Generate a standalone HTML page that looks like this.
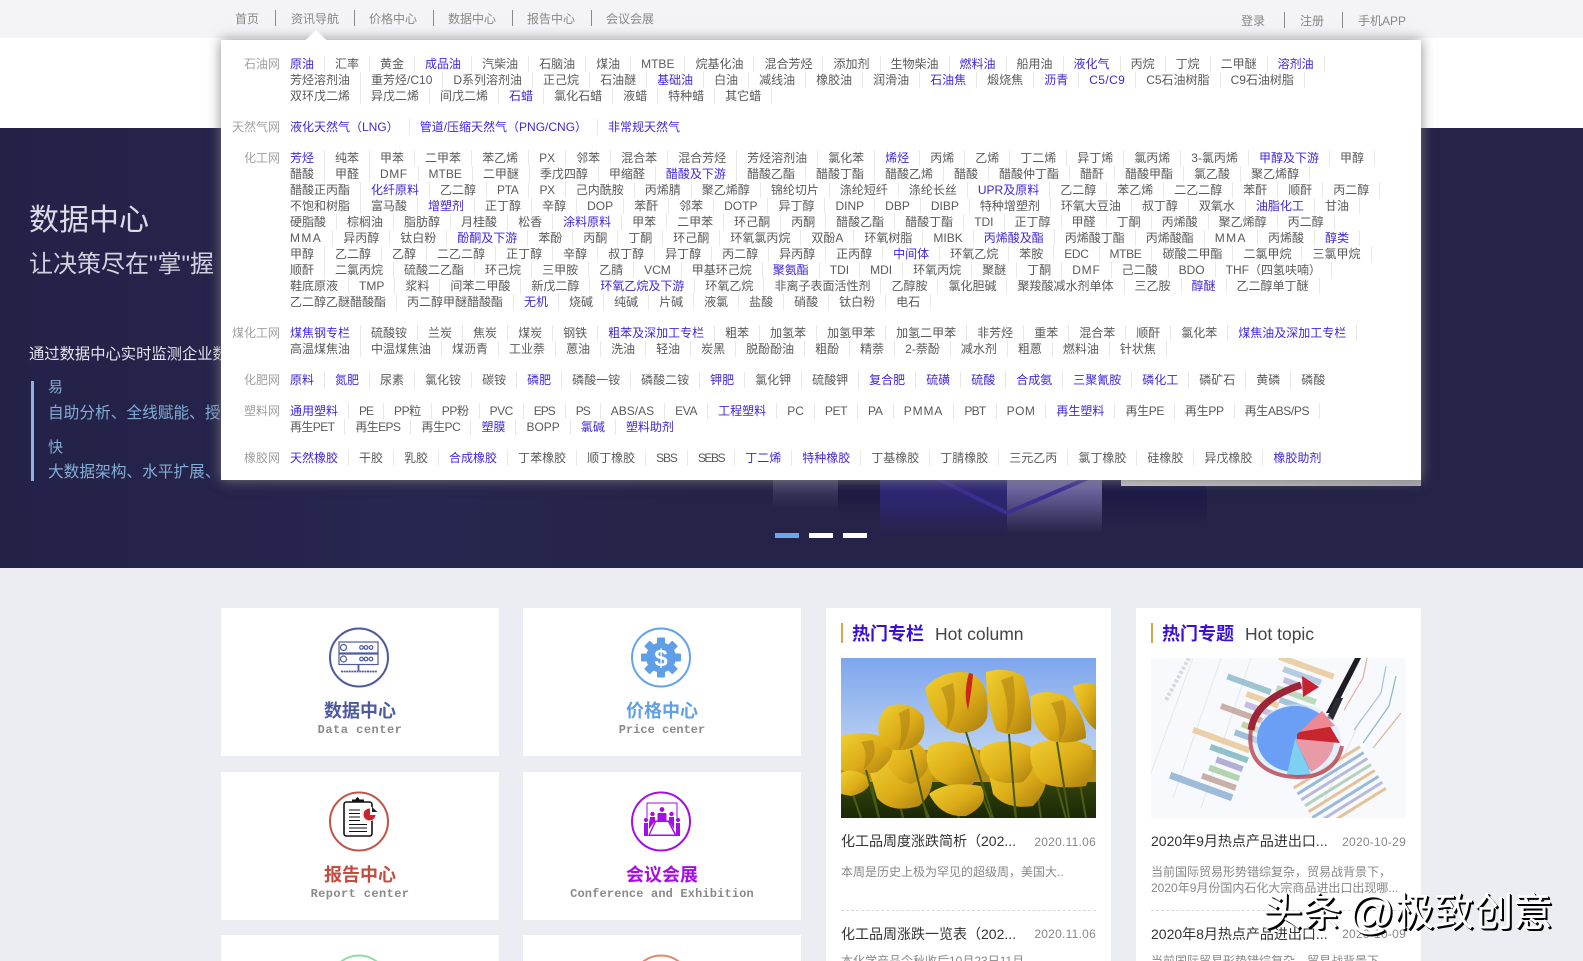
<!DOCTYPE html>
<html lang="zh">
<head>
<meta charset="utf-8">
<title>数据中心</title>
<style>
*{margin:0;padding:0;box-sizing:border-box}
html,body{width:1583px;height:961px;overflow:hidden;background:#ecedf3;font-family:"Liberation Sans","Noto Sans CJK SC",sans-serif;font-size:12px;color:#555}
#wrap{position:relative;width:1583px;height:961px;overflow:hidden;background:#ecedf3}
.abs{position:absolute}
#top{position:absolute;left:0;top:0;width:1583px;height:38px;background:#f3f3f8}
.nv{position:absolute;top:11px;line-height:16px;color:#888;white-space:nowrap}
.nv.u{top:13px}
.sp{position:absolute;width:1px;height:16px;top:10px;background:#8a8a8a}
.sp.u{top:12px}
#banner{position:absolute;left:0;top:38px;width:1583px;height:90px;background:#fff}
#hero{position:absolute;left:0;top:128px;width:1583px;height:440px;background:#252347;overflow:hidden}
#hero div{position:absolute}
.dot{position:absolute;top:533px;width:24px;height:5px;background:#fff}
#panel{position:absolute;left:221px;top:40px;width:1200px;height:440px;background:#fff;padding-top:16px;box-shadow:0 0 12px rgba(125,125,125,.9)}
.g{display:flex;margin-bottom:15px}
.g>label{width:59px;text-align:right;color:#a0a0a0;line-height:16px;white-space:nowrap;flex:none}
.r{display:flex;height:16px;line-height:16px}
.r span,.r a{padding:0 10px;border-right:1px solid #e8e8e8;white-space:nowrap;color:#5a5a5a}
.r a{color:#4526d6}
.r .m1{letter-spacing:-1px}.r .m8{letter-spacing:-.7px}.r .m5{letter-spacing:-.5px}.r .m3{letter-spacing:-.35px}
.r .p15{letter-spacing:1.4px}.r .p1{letter-spacing:.8px}.r .p9{letter-spacing:.9px}
.card{position:absolute;width:278px;height:148px;background:#fff;text-align:center}
.card svg{position:absolute;left:98px;top:10px}
.card b{position:absolute;left:0;width:100%;top:92px;font-size:18px;line-height:22px;font-weight:700;letter-spacing:0}
.card em{position:absolute;left:0;width:100%;top:115px;font:bold 12px/15px "Liberation Mono",monospace;color:#8a8a8a}
.col{position:absolute;top:608px;width:285px;height:353px;background:#fff;overflow:hidden}
.hd{position:absolute;left:15px;top:15px;height:20px;border-left:2px solid #d6a44c;white-space:nowrap;padding-left:9px;line-height:22px}
.hd b{font-size:18px;color:#3a0fd8;margin-right:11px}
.hd span{font-size:17.5px;color:#444}
.tt{position:absolute;left:15px;font-size:14px;line-height:20px;color:#333;white-space:nowrap}
.dt{position:absolute;right:15px;line-height:20px;color:#888;letter-spacing:.25px;white-space:nowrap}
.ds{position:absolute;left:15px;width:258px;line-height:16px;color:#888;white-space:nowrap}
.cut{height:8px;overflow:hidden}
.ln{position:absolute;left:15px;width:255px;top:302px;border-top:1px dashed #d8d8d8}
#wm{position:absolute;left:1263px;top:886px;font-size:39.5px;line-height:54px;color:#fff;text-shadow:2px 2px 0 #000,1px 1px 0 #000;white-space:nowrap}
#wm small{font-size:46px;line-height:40px;vertical-align:-2px;margin-left:-5px}
</style>
</head>
<body>
<div id="wrap">

<div id="top">
  <div class="nv" style="left:235px">首页</div><div class="sp" style="left:275px"></div>
  <div class="nv" style="left:291px">资讯导航</div><div class="sp" style="left:354px"></div>
  <div class="nv" style="left:369px">价格中心</div><div class="sp" style="left:433px"></div>
  <div class="nv" style="left:448px">数据中心</div><div class="sp" style="left:512px"></div>
  <div class="nv" style="left:527px">报告中心</div><div class="sp" style="left:591px"></div>
  <div class="nv" style="left:606px">会议会展</div>
  <div class="nv u" style="left:1241px">登录</div><div class="sp u" style="left:1284px"></div>
  <div class="nv u" style="left:1300px">注册</div><div class="sp u" style="left:1342px"></div>
  <div class="nv u" style="left:1358px">手机APP</div>
</div>

<div id="banner"></div>

<div id="hero">
  <div style="left:0;top:0;width:700px;height:440px;background:linear-gradient(90deg,#242147,#27264e 60%,#252347)"></div>
  <div style="left:773px;top:310px;width:65px;height:70px;background:linear-gradient(#7c7c9a,#55547a 40%,#252347)"></div>
  <div style="left:838px;top:310px;width:42px;height:80px;background:linear-gradient(#1b1840,#1a1740 55%,#252347)"></div>
  <div style="left:880px;top:310px;width:127px;height:100px;background:linear-gradient(#352e86,#2e2778 50%,#252347)"></div>
  <div style="left:1007px;top:310px;width:95px;height:100px;background:linear-gradient(#7f7bb2,#6c68a2 50%,#252347 95%)"></div>
  <div style="left:1102px;top:310px;width:105px;height:90px;background:linear-gradient(#1d1a4a,#1b1846 50%,#252347)"></div>
  <svg class="abs" style="left:900px;top:340px" width="220" height="50" viewBox="0 0 220 50"><path d="M36 10L107 45M107 45L188 10" stroke="#3a2f92" stroke-width="4" fill="none"/></svg>
  <div style="left:29px;top:71px;font-size:30px;line-height:44px;color:#dcdce8;white-space:nowrap">数据中心</div>
  <div style="left:29px;top:119px;font-size:24px;line-height:36px;color:#d2d2e0;white-space:nowrap">让决策尽在"掌"握</div>
  <div style="left:29px;top:216px;font-size:15.3px;line-height:22px;color:#e4e4ee;white-space:nowrap">通过数据中心实时监测企业数据</div>
  <div style="left:31px;top:253px;width:3px;height:100px;background:#8db4dc"></div>
  <div style="left:48px;top:248px;font-size:15px;line-height:24px;color:#82aed6;white-space:nowrap">易</div>
  <div style="left:48px;top:274px;font-size:15.7px;line-height:24px;color:#82aed6;white-space:nowrap">自助分析、全线赋能、授权</div>
  <div style="left:48px;top:308px;font-size:15px;line-height:24px;color:#82aed6;white-space:nowrap">快</div>
  <div style="left:48px;top:333px;font-size:15.7px;line-height:24px;color:#82aed6;white-space:nowrap">大数据架构、水平扩展、高</div>
</div>

<div class="dot" style="left:775px;background:#6aa8ea"></div>
<div class="dot" style="left:809px"></div>
<div class="dot" style="left:843px"></div>

<div class="abs" style="left:1121px;top:480px;width:300px;height:6px;background:linear-gradient(90deg,#c8c8ca,#adabb0)"></div>

<div id="panel">
  <div class="g"><label>石油网</label><div>
    <div class="r"><a>原油</a><span>汇率</span><span>黄金</span><a>成品油</a><span>汽柴油</span><span>石脑油</span><span>煤油</span><span>MTBE</span><span>烷基化油</span><span>混合芳烃</span><span>添加剂</span><span>生物柴油</span><a>燃料油</a><span>船用油</span><a>液化气</a><span>丙烷</span><span>丁烷</span><span>二甲醚</span><a>溶剂油</a></div>
    <div class="r"><span>芳烃溶剂油</span><span>重芳烃/C10</span><span>D系列溶剂油</span><span>正己烷</span><span>石油醚</span><a>基础油</a><span>白油</span><span>减线油</span><span>橡胶油</span><span>润滑油</span><a>石油焦</a><span>煅烧焦</span><a>沥青</a><a style="letter-spacing:.4px">C5/C9</a><span>C5石油树脂</span><span>C9石油树脂</span></div>
    <div class="r"><span>双环戊二烯</span><span>异戊二烯</span><span>间戊二烯</span><a>石蜡</a><span>氯化石蜡</span><span>液蜡</span><span>特种蜡</span><span>其它蜡</span></div>
  </div></div>
  <div class="g"><label>天然气网</label><div>
    <div class="r"><a>液化天然气（LNG）</a><a>管道/压缩天然气（PNG/CNG）</a><a style="border:0">非常规天然气</a></div>
  </div></div>
  <div class="g"><label>化工网</label><div>
    <div class="r"><a>芳烃</a><span>纯苯</span><span>甲苯</span><span>二甲苯</span><span>苯乙烯</span><span>PX</span><span>邻苯</span><span>混合苯</span><span>混合芳烃</span><span>芳烃溶剂油</span><span>氯化苯</span><a>烯烃</a><span>丙烯</span><span>乙烯</span><span>丁二烯</span><span>异丁烯</span><span>氯丙烯</span><span>3-氯丙烯</span><a>甲醇及下游</a><span>甲醇</span></div>
    <div class="r"><span>醋酸</span><span>甲醛</span><span style="letter-spacing:.5px">DMF</span><span>MTBE</span><span>二甲醚</span><span>季戊四醇</span><span>甲缩醛</span><a>醋酸及下游</a><span>醋酸乙酯</span><span>醋酸丁酯</span><span>醋酸乙烯</span><span>醋酸</span><span>醋酸仲丁酯</span><span>醋酐</span><span>醋酸甲酯</span><span>氯乙酸</span><span>聚乙烯醇</span></div>
    <div class="r"><span>醋酸正丙酯</span><a>化纤原料</a><span>乙二醇</span><span class="m3">PTA</span><span class="m3">PX</span><span>己内酰胺</span><span>丙烯腈</span><span>聚乙烯醇</span><span>锦纶切片</span><span>涤纶短纤</span><span>涤纶长丝</span><a>UPR及原料</a><span>乙二醇</span><span>苯乙烯</span><span>二乙二醇</span><span>苯酐</span><span>顺酐</span><span>丙二醇</span></div>
    <div class="r"><span>不饱和树脂</span><span>富马酸</span><a>增塑剂</a><span>正丁醇</span><span>辛醇</span><span>DOP</span><span>苯酐</span><span>邻苯</span><span>DOTP</span><span>异丁醇</span><span>DINP</span><span>DBP</span><span>DIBP</span><span>特种增塑剂</span><span>环氧大豆油</span><span>叔丁醇</span><span>双氧水</span><a>油脂化工</a><span>甘油</span></div>
    <div class="r"><span>硬脂酸</span><span>棕榈油</span><span>脂肪醇</span><span>月桂酸</span><span>松香</span><a>涂料原料</a><span>甲苯</span><span>二甲苯</span><span>环己酮</span><span>丙酮</span><span>醋酸乙酯</span><span>醋酸丁酯</span><span>TDI</span><span>正丁醇</span><span>甲醛</span><span>丁酮</span><span>丙烯酸</span><span>聚乙烯醇</span><span>丙二醇</span></div>
    <div class="r"><span class="p15">MMA</span><span>异丙醇</span><span>钛白粉</span><a>酚酮及下游</a><span>苯酚</span><span>丙酮</span><span>丁酮</span><span>环己酮</span><span>环氧氯丙烷</span><span>双酚A</span><span>环氧树脂</span><span>MIBK</span><a>丙烯酸及酯</a><span>丙烯酸丁酯</span><span>丙烯酸酯</span><span class="p15">MMA</span><span>丙烯酸</span><a>醇类</a></div>
    <div class="r"><span>甲醇</span><span>乙二醇</span><span>乙醇</span><span>二乙二醇</span><span>正丁醇</span><span>辛醇</span><span>叔丁醇</span><span>异丁醇</span><span>丙二醇</span><span>异丙醇</span><span>正丙醇</span><a>中间体</a><span>环氧乙烷</span><span>苯胺</span><span class="m3">EDC</span><span class="m3">MTBE</span><span>碳酸二甲酯</span><span>二氯甲烷</span><span>三氯甲烷</span></div>
    <div class="r"><span>顺酐</span><span>二氯丙烷</span><span>硫酸二乙酯</span><span>环己烷</span><span>三甲胺</span><span>乙腈</span><span>VCM</span><span>甲基环己烷</span><a>聚氨酯</a><span>TDI</span><span>MDI</span><span>环氧丙烷</span><span>聚醚</span><span>丁酮</span><span class="p1">DMF</span><span>己二酸</span><span>BDO</span><span>THF（四氢呋喃）</span></div>
    <div class="r"><span>鞋底原液</span><span>TMP</span><span>浆料</span><span>间苯二甲酸</span><span>新戊二醇</span><a>环氧乙烷及下游</a><span>环氧乙烷</span><span>非离子表面活性剂</span><span>乙醇胺</span><span>氯化胆碱</span><span>聚羧酸减水剂单体</span><span>三乙胺</span><a>醇醚</a><span>乙二醇单丁醚</span></div>
    <div class="r"><span>乙二醇乙醚醋酸酯</span><span>丙二醇甲醚醋酸酯</span><a>无机</a><span>烧碱</span><span>纯碱</span><span>片碱</span><span>液氯</span><span>盐酸</span><span>硝酸</span><span>钛白粉</span><span>电石</span></div>
  </div></div>
  <div class="g"><label>煤化工网</label><div>
    <div class="r"><a>煤焦钢专栏</a><span>硫酸铵</span><span>兰炭</span><span>焦炭</span><span>煤炭</span><span>钢铁</span><a>粗苯及深加工专栏</a><span>粗苯</span><span>加氢苯</span><span>加氢甲苯</span><span>加氢二甲苯</span><span>非芳烃</span><span>重苯</span><span>混合苯</span><span>顺酐</span><span>氯化苯</span><a>煤焦油及深加工专栏</a></div>
    <div class="r"><span>高温煤焦油</span><span>中温煤焦油</span><span>煤沥青</span><span>工业萘</span><span>蒽油</span><span>洗油</span><span>轻油</span><span>炭黑</span><span>脱酚酚油</span><span>粗酚</span><span>精萘</span><span>2-萘酚</span><span>减水剂</span><span>粗蒽</span><span>燃料油</span><span>针状焦</span></div>
  </div></div>
  <div class="g"><label>化肥网</label><div>
    <div class="r"><a>原料</a><a>氮肥</a><span>尿素</span><span>氯化铵</span><span>碳铵</span><a>磷肥</a><span>磷酸一铵</span><span>磷酸二铵</span><a>钾肥</a><span>氯化钾</span><span>硫酸钾</span><a>复合肥</a><a>硫磺</a><a>硫酸</a><a>合成氨</a><a>三聚氰胺</a><a>磷化工</a><span>磷矿石</span><span>黄磷</span><span style="border:0">磷酸</span></div>
  </div></div>
  <div class="g"><label>塑料网</label><div>
    <div class="r"><a>通用塑料</a><span class="m1">PE</span><span style="letter-spacing:-.45px">PP粒</span><span style="letter-spacing:-.35px">PP粉</span><span style="letter-spacing:-.55px">PVC</span><span class="m1">EPS</span><span class="m1">PS</span><span>ABS/AS</span><span style="letter-spacing:-.35px">EVA</span><a>工程塑料</a><span>PC</span><span style="letter-spacing:-.4px">PET</span><span style="letter-spacing:-.2px">PA</span><span class="p9">PMMA</span><span class="m8">PBT</span><span style="letter-spacing:.5px">POM</span><a>再生塑料</a><span class="m3">再生PE</span><span class="m3">再生PP</span><span class="m3">再生ABS/PS</span></div>
    <div class="r"><span style="letter-spacing:-.6px">再生PET</span><span style="letter-spacing:-.6px">再生EPS</span><span style="letter-spacing:-.4px">再生PC</span><a>塑膜</a><span>BOPP</span><a>氯碱</a><a style="border:0">塑料助剂</a></div>
  </div></div>
  <div class="g"><label>橡胶网</label><div>
    <div class="r"><a>天然橡胶</a><span>干胶</span><span>乳胶</span><a>合成橡胶</a><span>丁苯橡胶</span><span>顺丁橡胶</span><span style="letter-spacing:-1.1px">SBS</span><span style="letter-spacing:-1.4px">SEBS</span><a>丁二烯</a><a>特种橡胶</a><span>丁基橡胶</span><span>丁腈橡胶</span><span>三元乙丙</span><span>氯丁橡胶</span><span>硅橡胶</span><span>异戊橡胶</span><a style="border:0">橡胶助剂</a></div>
  </div></div>
</div>

<svg class="abs" style="left:305px;top:30px" width="22" height="11" viewBox="0 0 22 11"><path d="M0 10.5L11 0L22 10.5Z" fill="#fff"/></svg>

<div class="card" style="left:221px;top:608px;">
  <svg width="80" height="80" viewBox="0 0 80 80">
    <circle cx="40" cy="39.5" r="29" fill="none" stroke="#4d5a9e" stroke-width="2"/>
    <g fill="none" stroke="#4d5a9e" stroke-width="1.2">
      <rect x="20" y="24" width="39" height="11"/><rect x="20" y="36" width="39" height="10.5"/>
      <circle cx="24.5" cy="29.5" r="3"/><circle cx="24.5" cy="41" r="3"/>
      <circle cx="42.5" cy="29.5" r="1.8"/><circle cx="47" cy="29.5" r="1.8"/><circle cx="52" cy="29.5" r="1.8"/>
      <circle cx="42.5" cy="41" r="1.8"/><circle cx="47" cy="41" r="1.8"/><circle cx="52" cy="41" r="1.8"/>
      <path d="M39.5 46.5V53" stroke-width="1.8"/>
      <path d="M22 53.5H58" stroke-width="1.8" stroke-dasharray="2 .6"/>
    </g>
  </svg>
  <b style="color:#4d5a9e">数据中心</b><em style="letter-spacing:.5px">Data center</em>
</div>

<div class="card" style="left:523px;top:608px;">
  <svg width="80" height="80" viewBox="0 0 80 80">
    <circle cx="40" cy="39.5" r="29" fill="none" stroke="#62a4ea" stroke-width="2"/>
    <g fill="#5f9fe8" transform="translate(40 39.5)">
      <circle r="15"/>
      <rect x="-4" y="-20" width="8" height="40" rx="1"/>
      <rect x="-4" y="-20" width="8" height="40" rx="1" transform="rotate(45)"/>
      <rect x="-4" y="-20" width="8" height="40" rx="1" transform="rotate(90)"/>
      <rect x="-4" y="-20" width="8" height="40" rx="1" transform="rotate(135)"/>
    </g>
    <text x="40" y="48" text-anchor="middle" font-family="Liberation Sans" font-weight="700" font-size="24" fill="#fff">$</text>
  </svg>
  <b style="color:#62a0e6">价格中心</b><em style="letter-spacing:0">Price center</em>
</div>

<div class="card" style="left:221px;top:772px;">
  <svg width="80" height="80" viewBox="0 0 80 80">
    <circle cx="40" cy="39.5" r="29" fill="none" stroke="#c0564a" stroke-width="2"/>
    <rect x="25" y="20" width="28" height="34" rx="2.5" fill="#fff" stroke="#111" stroke-width="1.6"/>
    <path d="M33 20V17.5H36.5Q38.5 13 40.5 17.5H45V20Z" fill="#111"/>
    <path d="M30 28H41M30 31.5H41M30 35H41M30 38.5H41M30 42.5H48M30 46H48M30 49.5H48" stroke="#111" stroke-width="1"/>
    <circle cx="51" cy="32" r="7" fill="#fff"/>
    <path d="M51 26.5A6 6 0 1 0 56.5 33H51Z" fill="#c8262a"/>
    <path d="M53 25L58.5 30H53Z" fill="#222"/>
  </svg>
  <b style="color:#c24c40">报告中心</b><em style="letter-spacing:.4px">Report center</em>
</div>

<div class="card" style="left:523px;top:772px;">
  <svg width="80" height="80" viewBox="0 0 80 80">
    <circle cx="40" cy="39.5" r="29" fill="none" stroke="#a50ee6" stroke-width="2"/>
    <g fill="#a50ee6">
      <path d="M26 36V21H56V36" fill="none" stroke="#a50ee6" stroke-width="1"/>
      <circle cx="41" cy="27.5" r="2.4"/><rect x="36.5" y="31" width="9" height="8" rx="1"/>
      <circle cx="31.5" cy="32" r="2.2"/><circle cx="50.5" cy="32" r="2.2"/>
      <circle cx="25" cy="38" r="2.1"/><circle cx="57" cy="38" r="2.1"/>
      <path d="M29 35H34V39L28 47V41ZM48 35H53V41L53 47L48 39Z"/>
      <rect x="23" y="41" width="4" height="13"/><rect x="55" y="41" width="4" height="13"/>
      <path d="M34 38.5H48L56 54H27ZM35 40L29 52.5H53.5L47 40Z" fill-rule="evenodd"/>
    </g>
  </svg>
  <b style="color:#a50ee6">会议会展</b><em style="letter-spacing:.15px">Conference and Exhibition</em>
</div>

<div class="card" style="left:221px;top:935px;height:26px">
  <svg width="80" height="16" viewBox="0 0 80 16"><circle cx="40" cy="39.5" r="29" fill="none" stroke="#8edca4" stroke-width="2"/></svg>
</div>
<div class="card" style="left:523px;top:935px;height:26px">
  <svg width="80" height="16" viewBox="0 0 80 16"><circle cx="40" cy="39.5" r="29" fill="none" stroke="#e2866e" stroke-width="2"/></svg>
</div>

<div class="col" style="left:826px">
  <div class="hd"><b>热门专栏</b><span>Hot column</span></div>
  <svg class="abs" style="left:15px;top:50px" width="255" height="160" viewBox="0 0 255 160">
    <defs>
      <linearGradient id="sky" x1="0" y1="0" x2="0" y2="1"><stop offset="0" stop-color="#7ea6ee"/><stop offset=".6" stop-color="#bcd2f2"/></linearGradient>
      <linearGradient id="tu" x1="0" y1="0" x2="1" y2="1"><stop offset="0" stop-color="#f0d030"/><stop offset=".55" stop-color="#dcac18"/><stop offset="1" stop-color="#a87c10"/></linearGradient>
      <linearGradient id="gr" x1="0" y1="0" x2="0" y2="1"><stop offset="0" stop-color="#34440c"/><stop offset="1" stop-color="#1a2806"/></linearGradient>
    </defs>
    <rect width="255" height="160" fill="url(#sky)"/>
    <rect y="92" width="255" height="40" fill="#b88e14"/>
    <rect y="124" width="255" height="36" fill="url(#gr)"/>
    <g stroke="#4c5e14" stroke-width="2" fill="none">
      <path d="M8 125L20 160M30 125L38 160M55 130L62 160M140 135L150 160M170 130L175 160M195 125L200 160M215 125L225 160M238 120L245 160M110 140L118 160M78 135L88 160"/>
    </g>
    <g fill="url(#tu)">
      <path d="M28 112Q50 92 88 106Q98 130 78 148Q50 156 36 140Z"/>
      <path d="M146 108Q175 94 204 108Q210 130 192 148Q165 152 152 136Z"/>
      <path d="M45 100Q40 84 60 82Q80 80 88 100Q88 118 70 126Q50 122 45 100Z"/>
      <path d="M88 88Q110 78 135 90Q148 110 130 128Q105 132 92 118Q82 104 88 88Z"/>
      <path d="M140 90Q165 76 192 90Q198 108 182 124Q155 128 146 116Q136 102 140 90Z"/>
      <path d="M190 88Q220 74 250 88Q255 104 245 128Q215 132 200 124Q186 106 190 88Z"/>
      <path d="M0 78Q30 70 50 84Q56 100 36 114Q15 118 0 112Z"/>
      <path d="M40 85Q32 60 48 48Q70 42 82 58Q88 82 70 90Q52 96 40 85Z"/>
      <path d="M190 38Q205 30 225 38Q245 55 245 80Q225 88 208 82Q188 68 190 38Z"/>
      <path d="M232 28Q250 22 255 28V72Q240 62 232 28Z"/>
      <path d="M84 30Q102 10 130 15Q150 25 146 60Q140 75 118 75Q92 70 84 30Z"/>
      <path d="M145 14Q165 8 182 18Q192 45 190 72Q170 80 155 72Q145 45 145 14Z"/>
      <path d="M88 136Q105 122 140 128Q150 146 125 158Q100 160 88 136Z"/>
      <path d="M0 115Q15 108 30 122Q28 134 10 138L0 136Z"/>
    </g>
    <path d="M128 15Q122 35 127 52Q131 30 132 16Z" fill="#c8281c"/>
    <g fill="#a87a14" opacity=".5">
      <path d="M100 30Q110 50 105 72Q118 55 112 25Z"/>
      <path d="M160 22Q170 50 165 76Q178 55 172 18Z"/>
      <path d="M210 45Q220 62 218 84Q230 65 222 42Z"/>
      <path d="M58 55Q62 72 58 92Q72 75 68 50Z"/>
      <path d="M20 84Q28 95 22 112Q38 100 32 82Z"/>
    </g>
    <g stroke="#4a5a12" stroke-width="2" fill="none"><path d="M125 74L152 160M168 76L175 160M216 84L228 160M70 92L86 160M25 112L38 160"/></g>
  </svg>
  <div class="tt" style="top:223px">化工品周度涨跌简析（202...</div><div class="dt" style="top:224px">2020.11.06</div>
  <div class="ds" style="top:256px">本周是历史上极为罕见的超级周，美国大..</div>
  <div class="ln"></div>
  <div class="tt" style="top:316px">化工品周涨跌一览表（202...</div><div class="dt" style="top:316px">2020.11.06</div>
  <div class="ds cut" style="top:345px">本化学产品今秋收后10月23日11月</div>
</div>

<div class="col" style="left:1136px">
  <div class="hd"><b>热门专题</b><span>Hot topic</span></div>
  <svg class="abs" style="left:15px;top:50px" width="255" height="160" viewBox="0 0 255 160">
    <rect width="255" height="160" fill="#f7f9fd"/>
    <g stroke="#e4e7ee" stroke-width="1" fill="none"><path d="M0 115L42 0M22 140L70 0M50 150L100 0M170 150L210 60"/></g>
    <path d="M15 42L38 0" stroke="#d5d9e2" stroke-width="4" stroke-dasharray="3 2"/>
    <g transform="rotate(20 120 80)" opacity=".8">
      <rect x="100" y="-2" width="58" height="6" fill="#e8c592"/>
      <rect x="108" y="8" width="40" height="6" fill="#a8c0dc"/>
      <rect x="112" y="18" width="28" height="6" fill="#b7b0da"/>
      <rect x="108" y="28" width="42" height="6" fill="#aed2ac"/>
      <rect x="115" y="38" width="30" height="6" fill="#8fb8d0"/>
      <rect x="58" y="34" width="46" height="6" fill="#88b6c8"/>
      <rect x="82" y="44" width="34" height="6" fill="#e8c592"/>
      <rect x="84" y="54" width="30" height="6" fill="#b7b0da"/>
      <rect x="62" y="64" width="44" height="6" fill="#c09c94"/>
      <rect x="88" y="74" width="26" height="6" fill="#b7cc8c"/>
      <rect x="84" y="84" width="30" height="6" fill="#88b0d0"/>
      <rect x="44" y="96" width="60" height="6" fill="#e8c592"/>
      <rect x="66" y="106" width="40" height="6" fill="#78b4bc"/>
      <rect x="76" y="116" width="28" height="6" fill="#a29cd0"/>
      <rect x="72" y="126" width="32" height="6" fill="#a2cca0"/>
      <rect x="68" y="136" width="36" height="6" fill="#c09c94"/>
      <rect x="38" y="146" width="66" height="7" fill="#88aed0"/>
    </g>
    <g transform="rotate(-32 190 130)" opacity=".85">
      <g fill="none" stroke-width="3"><path d="M150 105H228" stroke="#e2b888"/><path d="M150 112H228" stroke="#88b0d0"/><path d="M150 119H228" stroke="#aeb0d8"/><path d="M150 126H228" stroke="#a8ccb0"/><path d="M150 133H228" stroke="#e2b888"/><path d="M150 140H228" stroke="#88b0d0"/><path d="M150 147H228" stroke="#aeb0d8"/><path d="M150 154H228" stroke="#e2b888"/></g>
    </g>
    <g fill="none" stroke-width="1.2">
      <path d="M193 52L212 20L216 0" stroke="#e0b0a0"/><path d="M203 72L230 35L235 8" stroke="#a8c0dc"/>
      <path d="M212 85L238 48L245 18" stroke="#88b8c8"/><path d="M222 90L250 55" stroke="#d8b898"/>
    </g>
    <path d="M204 0L210 0L182 55L175 55Z" fill="#1c1c22"/>
    <path d="M185 40L192 40L182 62L176 60Z" fill="#2a2a32"/>
    <ellipse cx="146" cy="84" rx="44" ry="38" fill="#cfe8fb" opacity=".5"/>
    <ellipse cx="144" cy="81" rx="38" ry="33" fill="#6b9ef5"/>
    <path d="M144 81L160 116Q150 122 136 116Z" fill="#7cd0f2"/>
    <path d="M144 81L183 75Q186 100 160 114Z" fill="#e89aa6"/>
    <path d="M146 76L171 55L189 85L146 81Z" fill="#c8262f"/>
    <path d="M148 74L171 53L184 68Z" fill="#ee8894"/>
    <path d="M100 72Q96 98 114 110Q132 122 160 118Q186 112 191 88" fill="none" stroke="#b8404e" stroke-width="4" opacity=".8"/>
    <path d="M100 72Q104 42 150 27" fill="none" stroke="#9c2434" stroke-width="7"/>
    <path d="M151 18L168 29L152 39Z" fill="#c7202e"/>
  </svg>
  <div class="tt" style="top:223px">2020年9月热点产品进出口...</div><div class="dt" style="top:224px">2020-10-29</div>
  <div class="ds" style="top:256px">当前国际贸易形势错综复杂，贸易战背景下，</div>
  <div class="ds" style="top:272px">2020年9月份国内石化大宗商品进出口出现哪...</div>
  <div class="ln"></div>
  <div class="tt" style="top:316px">2020年8月热点产品进出口...</div><div class="dt" style="top:316px">2020-10-09</div>
  <div class="ds cut" style="top:345px">当前国际贸易形势错综复杂，贸易战背景下</div>
</div>

<div id="wm">头条 <small>@</small>极致创意</div>

</div>
</body>
</html>
